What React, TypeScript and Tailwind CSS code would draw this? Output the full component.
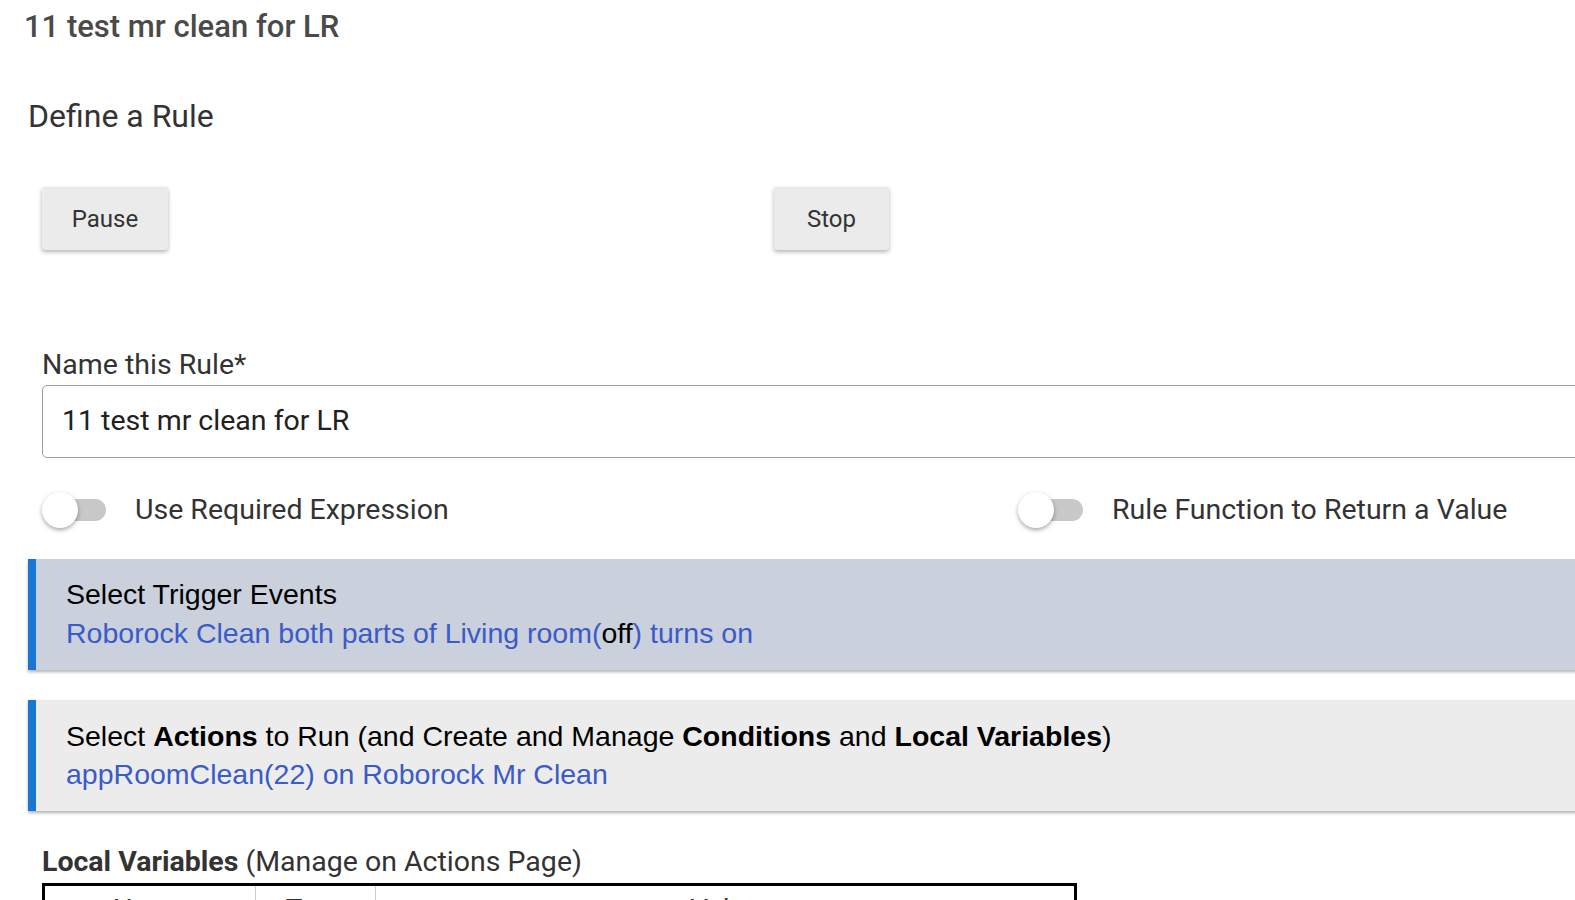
export default function App() {
  return (
    <div className="w-[1575px] h-[900px] overflow-hidden bg-white font-['Roboto',sans-serif] text-[#333]">
      <div className="pl-[24px] pt-[9px] text-[31px] font-medium leading-[36px] text-[#4a4a4a]">11 test mr clean for LR</div>
      <div className="pl-[28px] mt-[53px] text-[32px] leading-[36px] text-[#333]">Define a Rule</div>

      <div className="flex mt-[53px] pl-[42px]">
        <button className="w-[126px] h-[63px] bg-[#ebebeb] rounded-[3px] shadow-[0_2px_4px_rgba(0,0,0,0.3)] text-[24px] text-[#333]">Pause</button>
        <button className="ml-[606px] w-[115px] h-[63px] bg-[#ebebeb] rounded-[3px] shadow-[0_2px_4px_rgba(0,0,0,0.3)] text-[24px] text-[#333]">Stop</button>
      </div>

      <div className="pl-[42px] mt-[99px] text-[28.5px] leading-[32px] text-[#333]">Name this Rule*</div>
      <div className="pl-[42px] mt-[4px]">
        <div className="w-[1600px] h-[73px] border border-[#9e9e9e] rounded-[5px] pl-[19px] flex items-center text-[28.5px] text-[#212121]">11 test mr clean for LR</div>
      </div>

      <div className="flex mt-[32px] pl-[42px] h-[40px] items-center">
        <div className="w-[976px] flex items-center">
          <div className="relative w-[66px] h-[40px] shrink-0">
            <div className="absolute left-[2px] top-[9px] w-[62px] h-[22px] rounded-full bg-[#c8c8c8]"></div>
            <div className="absolute left-0 top-[2px] w-[36px] h-[36px] rounded-full bg-white shadow-[0_2px_4px_rgba(0,0,0,0.35)]"></div>
          </div>
          <span className="ml-[27px] text-[28.5px] text-[#333]">Use Required Expression</span>
        </div>
        <div className="flex items-center">
          <div className="relative w-[66px] h-[40px] shrink-0">
            <div className="absolute left-[2px] top-[9px] w-[63px] h-[22px] rounded-full bg-[#c8c8c8]"></div>
            <div className="absolute left-0 top-[2px] w-[36px] h-[36px] rounded-full bg-white shadow-[0_2px_4px_rgba(0,0,0,0.35)]"></div>
          </div>
          <span className="ml-[28px] text-[28.5px] text-[#333]">Rule Function to Return a Value</span>
        </div>
      </div>

      <div className="ml-[28px] mt-[29px] w-[1600px] border-l-[8px] border-[#1976d2] bg-[#cad0dc] shadow-[0_2px_3px_rgba(0,0,0,0.3)] pl-[30px] pt-[16px] pb-[17px] font-['Liberation_Sans',Arial,sans-serif] text-[28.5px] leading-[39px]">
        <div className="text-black">Select Trigger Events</div>
        <div className="text-[#3b5bc8]">Roborock Clean both parts of Living room(<span className="text-black">off</span>) turns on</div>
      </div>

      <div className="ml-[28px] mt-[30px] w-[1600px] border-l-[8px] border-[#1976d2] bg-[#ececec] shadow-[0_2px_3px_rgba(0,0,0,0.3)] pl-[30px] pt-[17px] pb-[18px] font-['Liberation_Sans',Arial,sans-serif] text-[28.5px] leading-[38px]">
        <div className="text-black">Select <b>Actions</b> to Run (and Create and Manage <b>Conditions</b> and <b>Local Variables</b>)</div>
        <div className="text-[#3b5bc8]">appRoomClean(22) on Roborock Mr Clean</div>
      </div>

      <div className="pl-[42px] mt-[35px] text-[28.5px] leading-[32px] text-[#333]"><span className="font-bold">Local Variables</span> (Manage on Actions Page)</div>
      <div className="pl-[42px] mt-[5px]">
        <div className="w-[1035px] border-[3px] border-black flex text-[28px] text-[#333] leading-[40px]">
          <div className="w-[211px] border-r border-[#ccc] text-center pt-[4px]">Name</div>
          <div className="w-[120px] border-r border-[#ccc] text-center pt-[4px]">Type</div>
          <div className="flex-1 text-center pt-[4px]">Value</div>
        </div>
      </div>
    </div>
  );
}
